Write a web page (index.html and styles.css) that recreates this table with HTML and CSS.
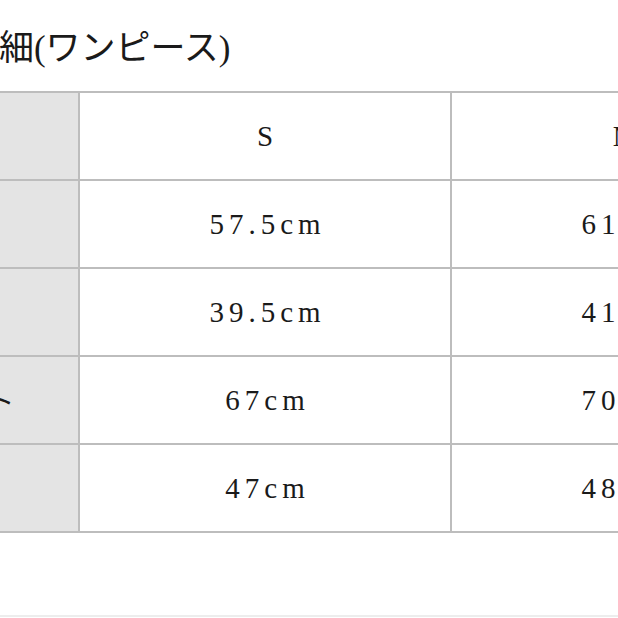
FILE: index.html
```html
<!DOCTYPE html>
<html lang="ja">
<head>
<meta charset="utf-8">
<title>サイズ詳細(ワンピース)</title>
<link rel="stylesheet" href="styles.css">
</head>
<body>
<div class="page">
  <h2 class="title">サイズ詳細(ワンピース)</h2>
  <div class="size-table">
    <div class="cell label"></div>
    <div class="cell">S</div>
    <div class="cell">ML</div>

    <div class="cell label">着丈</div>
    <div class="cell">57.5cm</div>
    <div class="cell">61.5cm</div>

    <div class="cell label">肩幅</div>
    <div class="cell">39.5cm</div>
    <div class="cell">41.5cm</div>

    <div class="cell label">ウエスト</div>
    <div class="cell">67cm</div>
    <div class="cell">70.5cm</div>

    <div class="cell label">身幅</div>
    <div class="cell">47cm</div>
    <div class="cell">48.5cm</div>
  </div>
  <div class="divider"></div>
</div>
</body>
</html>
```

FILE: styles.css
```css
html, body {
  margin: 0;
  padding: 0;
  overflow: hidden;
  background: #ffffff;
}

.page {
  margin-left: -170px;
  width: 1000px;
}

.title {
  margin: 0 0 22px 0;
  padding: 29px 0 0 30px;
  height: 40px;
  line-height: 40px;
  font-size: 35px;
  font-weight: normal;
  color: #1a1a1a;
  font-family: "Liberation Serif", "Noto Sans CJK JP", serif;
  white-space: nowrap;
}

.size-table {
  display: grid;
  grid-template-columns: 248px 370px 370px;
  grid-auto-rows: 86px;
  gap: 2px;
  padding: 2px 0;
  width: 992px;
  background: #bdbdbd;
}

.cell {
  background: #ffffff;
  display: flex;
  align-items: center;
  justify-content: center;
  font-family: "Liberation Serif", "Noto Sans CJK JP", serif;
  font-size: 29px;
  letter-spacing: 5px;
  padding-left: 5px;
  color: #1a1a1a;
  white-space: nowrap;
}

.cell.label {
  background: #e4e4e4;
  font-family: "Noto Sans CJK JP", sans-serif;
  font-size: 28px;
  letter-spacing: 3px;
  padding-left: 3px;
}

.divider {
  margin-top: 82px;
  height: 2px;
  background: #ededed;
}
```
